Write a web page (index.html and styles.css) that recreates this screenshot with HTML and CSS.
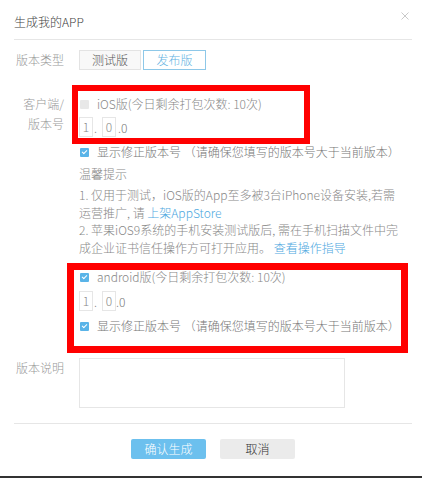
FILE: index.html
```html
<!DOCTYPE html>
<html lang="zh-CN">
<head>
    <meta charset="UTF-8">
    <meta name="viewport" content="width=device-width, initial-scale=1.0">
    <title>生成我的APP</title>
    <link rel="stylesheet" href="styles.css">
</head>
<body>
    <div class="dialog">
        <!-- Header -->
        <div class="dialog-header">
            <div class="dialog-title">生成我的APP</div>
            <svg class="close" width="8" height="8" viewBox="0 0 8 8">
                <path d="M0.5 0.5 L7.5 7.5 M7.5 0.5 L0.5 7.5" stroke="#c9c9c9" stroke-width="1" fill="none"/>
            </svg>
        </div>

        <!-- Body -->
        <div class="dialog-body">
            <div class="form-row row-type">
                <div class="form-label">版本类型</div>
                <div class="form-field">
                    <div class="seg-group">
                        <button class="seg">测试版</button>
                        <button class="seg active">发布版</button>
                    </div>
                </div>
            </div>

            <div class="form-row row-client">
                <div class="form-label">客户端/<br>版本号</div>
                <div class="form-field">
                    <div class="check-line"><span class="check"></span>iOS版(今日剩余打包次数: 10次)</div>
                    <div class="version">
                        <span class="ver-box">1</span><span class="dot">.</span><span class="ver-box">0</span><span class="ver-tail ios-tail">.0</span>
                    </div>
                    <div class="check-line fix-line"><span class="check on"></span>显示修正版本号 （请确保您填写的版本号大于当前版本）</div>

                    <div class="tips">
                        <div class="tips-title">温馨提示</div>
                        <div class="tips-text">
                            1. 仅用于测试，iOS版的App至多被3台iPhone设备安装,若需<br>
                            运营推广, 请 <a href="#" class="link">上架AppStore</a><br>
                            2. 苹果iOS9系统的手机安装测试版后, 需在手机扫描文件中完<br>
                            成企业证书信任操作方可打开应用。 <a href="#" class="link">查看操作指导</a>
                        </div>
                    </div>

                    <div class="android">
                        <div class="check-line"><span class="check on"></span>android版(今日剩余打包次数: 10次)</div>
                        <div class="version">
                            <span class="ver-box">1</span><span class="dot">.</span><span class="ver-box">0</span><span class="ver-tail">.0</span>
                        </div>
                        <div class="check-line fix-line"><span class="check on"></span>显示修正版本号 （请确保您填写的版本号大于当前版本）</div>
                    </div>
                </div>
            </div>

            <div class="form-row row-desc">
                <div class="form-label">版本说明</div>
                <div class="form-field">
                    <textarea class="desc"></textarea>
                </div>
            </div>
        </div>

        <!-- Footer -->
        <div class="dialog-footer">
            <button class="btn btn-primary">确认生成</button>
            <button class="btn btn-cancel">取消</button>
        </div>

        <!-- Red highlight marks -->
        <div class="mark mark-ios"></div>
        <div class="mark mark-android"></div>
    </div>
</body>
</html>
```

FILE: styles.css
```css
body {
    margin: 0;
    padding: 0;
    background-color: #333;
    font-family: "Noto Sans CJK SC", "Noto Sans", sans-serif;
    font-size: 12px;
    font-weight: 300;
    color: #777;
}
.dialog {
    position: relative;
    width: 422px;
    height: 476px;
    background-color: #fff;
    overflow: hidden;
}
.dialog-header {
    display: flex;
    justify-content: space-between;
    align-items: flex-start;
    height: 39px;
    margin: 0 10px 0 14px;
    border-bottom: 1px solid #e6e6e6;
}
.dialog-title {
    padding-top: 13px;
    line-height: 18px;
    color: #444;
}
.close {
    margin-top: 12px;
    margin-right: 3px;
}
.form-row {
    display: flex;
    align-items: flex-start;
}
.form-label {
    width: 50px;
    margin-left: 14px;
    margin-right: 15px;
    text-align: right;
    line-height: 20px;
    color: #999;
    flex-shrink: 0;
}
.form-field {
    flex: 1;
}
.row-type {
    margin-top: 10px;
}
.row-client {
    margin-top: 24px;
}
.row-desc {
    margin-top: 22px;
}
.seg-group {
    display: flex;
    gap: 2px;
}
.seg {
    height: 20px;
    padding: 0;
    font-family: inherit;
    font-size: 12px;
    font-weight: 300;
    line-height: 18px;
    background-color: #f8f8f8;
    border: 1px solid #e3e3e3;
    color: #555;
    width: 62px;
}
.seg.active {
    width: 63px;
    background-color: #fff;
    border-color: #8ec8e8;
    color: #62b2e2;
}
.check-line {
    display: flex;
    align-items: center;
    height: 20px;
    line-height: 20px;
    color: #888;
    white-space: nowrap;
}
.check {
    position: relative;
    display: inline-block;
    width: 9px;
    height: 9px;
    margin-left: 1px;
    margin-right: 8px;
    border-radius: 1px;
    background-color: #e8e8e8;
}
.check.on {
    background-color: #5ab4e8;
}
.check.on::after {
    content: "";
    position: absolute;
    left: 3px;
    top: 1px;
    width: 2px;
    height: 4px;
    border-right: 1px solid #fff;
    border-bottom: 1px solid #fff;
    transform: rotate(45deg);
}
.fix-line {
    margin-top: 5px;
    color: #777;
}
.version {
    display: flex;
    align-items: center;
    margin-top: 3px;
    height: 20px;
    color: #777;
}
.ver-box {
    display: inline-block;
    box-sizing: border-box;
    width: 14px;
    height: 20px;
    line-height: 18px;
    text-align: center;
    border: 1px solid #e6e6e6;
    color: #888;
}
.dot {
    display: inline-block;
    width: 8px;
    padding-left: 1px;
}
.ios-tail {
    margin-left: 2px;
}
.tips {
    margin-top: 3px;
    color: #888;
}
.tips-title {
    line-height: 18px;
}
.tips-text {
    margin-top: 3px;
    line-height: 17.5px;
    white-space: nowrap;
}
.link {
    color: #4ea8e0;
    text-decoration: none;
}
.android {
    margin-top: 11px;
}
.android .version {
    margin-top: 4px;
}
.desc {
    display: block;
    box-sizing: border-box;
    width: 266px;
    height: 50px;
    margin: 0;
    border: 1px solid #e6e6e6;
    resize: none;
}
.dialog-footer {
    display: flex;
    justify-content: center;
    gap: 14px;
    margin: 15px 10px 0 14px;
    padding-top: 15px;
    border-top: 1px solid #e6e6e6;
}
.btn {
    width: 75px;
    height: 20px;
    padding: 0;
    border: none;
    border-radius: 2px;
    font-family: inherit;
    font-size: 12px;
    font-weight: 300;
    line-height: 20px;
}
.btn-primary {
    background-color: #6cc0ee;
    color: #fff;
}
.btn-cancel {
    background-color: #ebebeb;
    color: #333;
}
.mark {
    position: absolute;
    border: 6px solid #f00;
    pointer-events: none;
}
.mark-ios {
    left: 72px;
    top: 85px;
    width: 226px;
    height: 47px;
}
.mark-android {
    left: 67px;
    top: 263px;
    width: 327px;
    height: 76px;
    border-width: 7px;
}
```
